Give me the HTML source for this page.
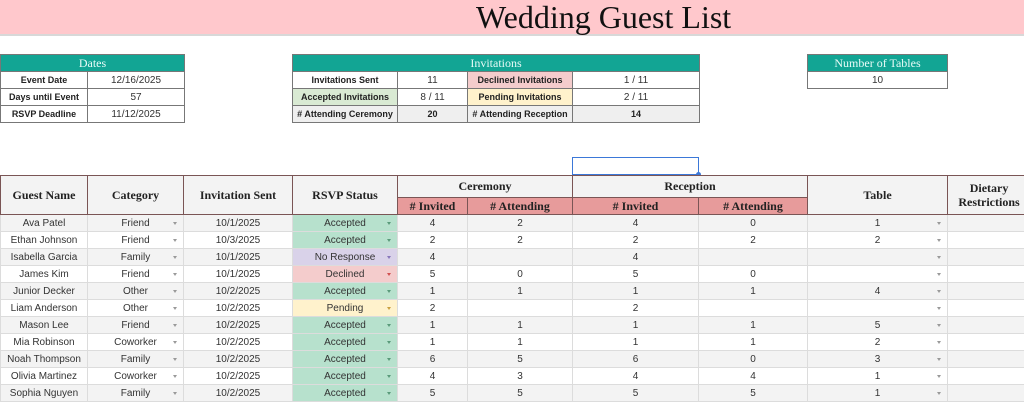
<!DOCTYPE html>
<html><head><meta charset="utf-8"><style>
*{margin:0;padding:0;box-sizing:border-box}
body{width:1024px;height:402px;overflow:hidden;background:#fff;font-family:"Liberation Sans",Arial,sans-serif;font-size:10px;color:#333;position:relative}
.title{position:absolute;left:0;top:0;width:1024px;height:36px;background:#ffc8cc;border-bottom:2px solid #d8d8d8}
.title span{position:absolute;left:476px;top:0;font-family:"Liberation Serif",serif;font-size:32px;line-height:35px;color:#111}
table{position:absolute;border-collapse:collapse;table-layout:fixed}
td{border:1px solid #777;text-align:center;height:17px;padding:0;white-space:nowrap;overflow:hidden}
.h{background:#12a594;color:#e8fbf7;font-family:"Liberation Serif",serif;font-size:12px}
b{font-weight:bold;color:#222;font-size:9px}
.main td{border:1px solid #dcdcdc;height:17px}
.main tr.hd td{background:#fcc5ca;border:1px solid #7a5555;font-family:"Liberation Serif",serif;font-weight:bold;font-size:12px;color:#222}
.main tr.hd td.s{background:#e79b9b}
.main tr:nth-child(odd) td{background:#f3f3f3}
.g{background:#b7e1cd!important}.p{background:#d9d2e9!important}.r{background:#f4cccc!important}.y{background:#fff2cc!important}
.dd{position:relative}
.dd:after{content:"";position:absolute;right:6px;top:7px;border:2.5px solid transparent;border-top:3px solid #999}
.g.dd:after{border-top-color:#5a9a7a}.r.dd:after{border-top-color:#d05050}.p.dd:after{border-top-color:#8877bb}.y.dd:after{border-top-color:#c9a040}
</style></head><body>
<div class="title"><span>Wedding Guest List</span></div>

<table style="left:0;top:54px;width:184px">
<col style="width:87px"><col style="width:97px">
<tr><td colspan="2" class="h">Dates</td></tr>
<tr><td><b>Event Date</b></td><td>12/16/2025</td></tr>
<tr><td><b>Days until Event</b></td><td>57</td></tr>
<tr><td><b>RSVP Deadline</b></td><td>11/12/2025</td></tr>
</table>

<table style="left:292px;top:54px;width:407px">
<col style="width:105px"><col style="width:70px"><col style="width:105px"><col style="width:127px">
<tr><td colspan="4" class="h">Invitations</td></tr>
<tr><td><b>Invitations Sent</b></td><td>11</td><td style="background:#f4cccc"><b>Declined Invitations</b></td><td>1 / 11</td></tr>
<tr><td style="background:#d9ead3"><b>Accepted Invitations</b></td><td>8 / 11</td><td style="background:#fff2cc"><b>Pending Invitations</b></td><td>2 / 11</td></tr>
<tr><td style="background:#efefef"><b># Attending Ceremony</b></td><td style="background:#efefef"><b>20</b></td><td style="background:#efefef"><b># Attending Reception</b></td><td style="background:#efefef"><b>14</b></td></tr>
</table>

<table style="left:807px;top:54px;width:141px">
<tr><td class="h">Number of Tables</td></tr>
<tr><td>10</td></tr>
</table>

<div style="position:absolute;left:572px;top:157px;width:127px;height:18px;border:1px solid #3b78d8"></div>
<div style="position:absolute;left:696px;top:172px;width:5px;height:5px;background:#3b78d8;border-radius:50%"></div>

<table class="main" style="left:0;top:175px;width:1030px">
<col style="width:87px"><col style="width:96px"><col style="width:109px"><col style="width:105px"><col style="width:70px"><col style="width:105px"><col style="width:126px"><col style="width:109px"><col style="width:140px"><col style="width:83px">
<tr class="hd"><td rowspan="2" style="height:39px">Guest Name</td><td rowspan="2">Category</td><td rowspan="2">Invitation Sent</td><td rowspan="2">RSVP Status</td><td colspan="2" style="height:22px">Ceremony</td><td colspan="2">Reception</td><td rowspan="2">Table</td><td rowspan="2" style="line-height:14px">Dietary<br>Restrictions</td></tr>
<tr class="hd"><td class="s"># Invited</td><td class="s"># Attending</td><td class="s"># Invited</td><td class="s"># Attending</td></tr>
<tr><td>Ava Patel</td><td class="dd">Friend</td><td>10/1/2025</td><td class="g dd">Accepted</td><td>4</td><td>2</td><td>4</td><td>0</td><td class="dd">1</td><td></td></tr>
<tr><td>Ethan Johnson</td><td class="dd">Friend</td><td>10/3/2025</td><td class="g dd">Accepted</td><td>2</td><td>2</td><td>2</td><td>2</td><td class="dd">2</td><td></td></tr>
<tr><td>Isabella Garcia</td><td class="dd">Family</td><td>10/1/2025</td><td class="p dd">No Response</td><td>4</td><td></td><td>4</td><td></td><td class="dd"></td><td></td></tr>
<tr><td>James Kim</td><td class="dd">Friend</td><td>10/1/2025</td><td class="r dd">Declined</td><td>5</td><td>0</td><td>5</td><td>0</td><td class="dd"></td><td></td></tr>
<tr><td>Junior Decker</td><td class="dd">Other</td><td>10/2/2025</td><td class="g dd">Accepted</td><td>1</td><td>1</td><td>1</td><td>1</td><td class="dd">4</td><td></td></tr>
<tr><td>Liam Anderson</td><td class="dd">Other</td><td>10/2/2025</td><td class="y dd">Pending</td><td>2</td><td></td><td>2</td><td></td><td class="dd"></td><td></td></tr>
<tr><td>Mason Lee</td><td class="dd">Friend</td><td>10/2/2025</td><td class="g dd">Accepted</td><td>1</td><td>1</td><td>1</td><td>1</td><td class="dd">5</td><td></td></tr>
<tr><td>Mia Robinson</td><td class="dd">Coworker</td><td>10/2/2025</td><td class="g dd">Accepted</td><td>1</td><td>1</td><td>1</td><td>1</td><td class="dd">2</td><td></td></tr>
<tr><td>Noah Thompson</td><td class="dd">Family</td><td>10/2/2025</td><td class="g dd">Accepted</td><td>6</td><td>5</td><td>6</td><td>0</td><td class="dd">3</td><td></td></tr>
<tr><td>Olivia Martinez</td><td class="dd">Coworker</td><td>10/2/2025</td><td class="g dd">Accepted</td><td>4</td><td>3</td><td>4</td><td>4</td><td class="dd">1</td><td></td></tr>
<tr><td>Sophia Nguyen</td><td class="dd">Family</td><td>10/2/2025</td><td class="g dd">Accepted</td><td>5</td><td>5</td><td>5</td><td>5</td><td class="dd">1</td><td></td></tr>
</table>
</body></html>
